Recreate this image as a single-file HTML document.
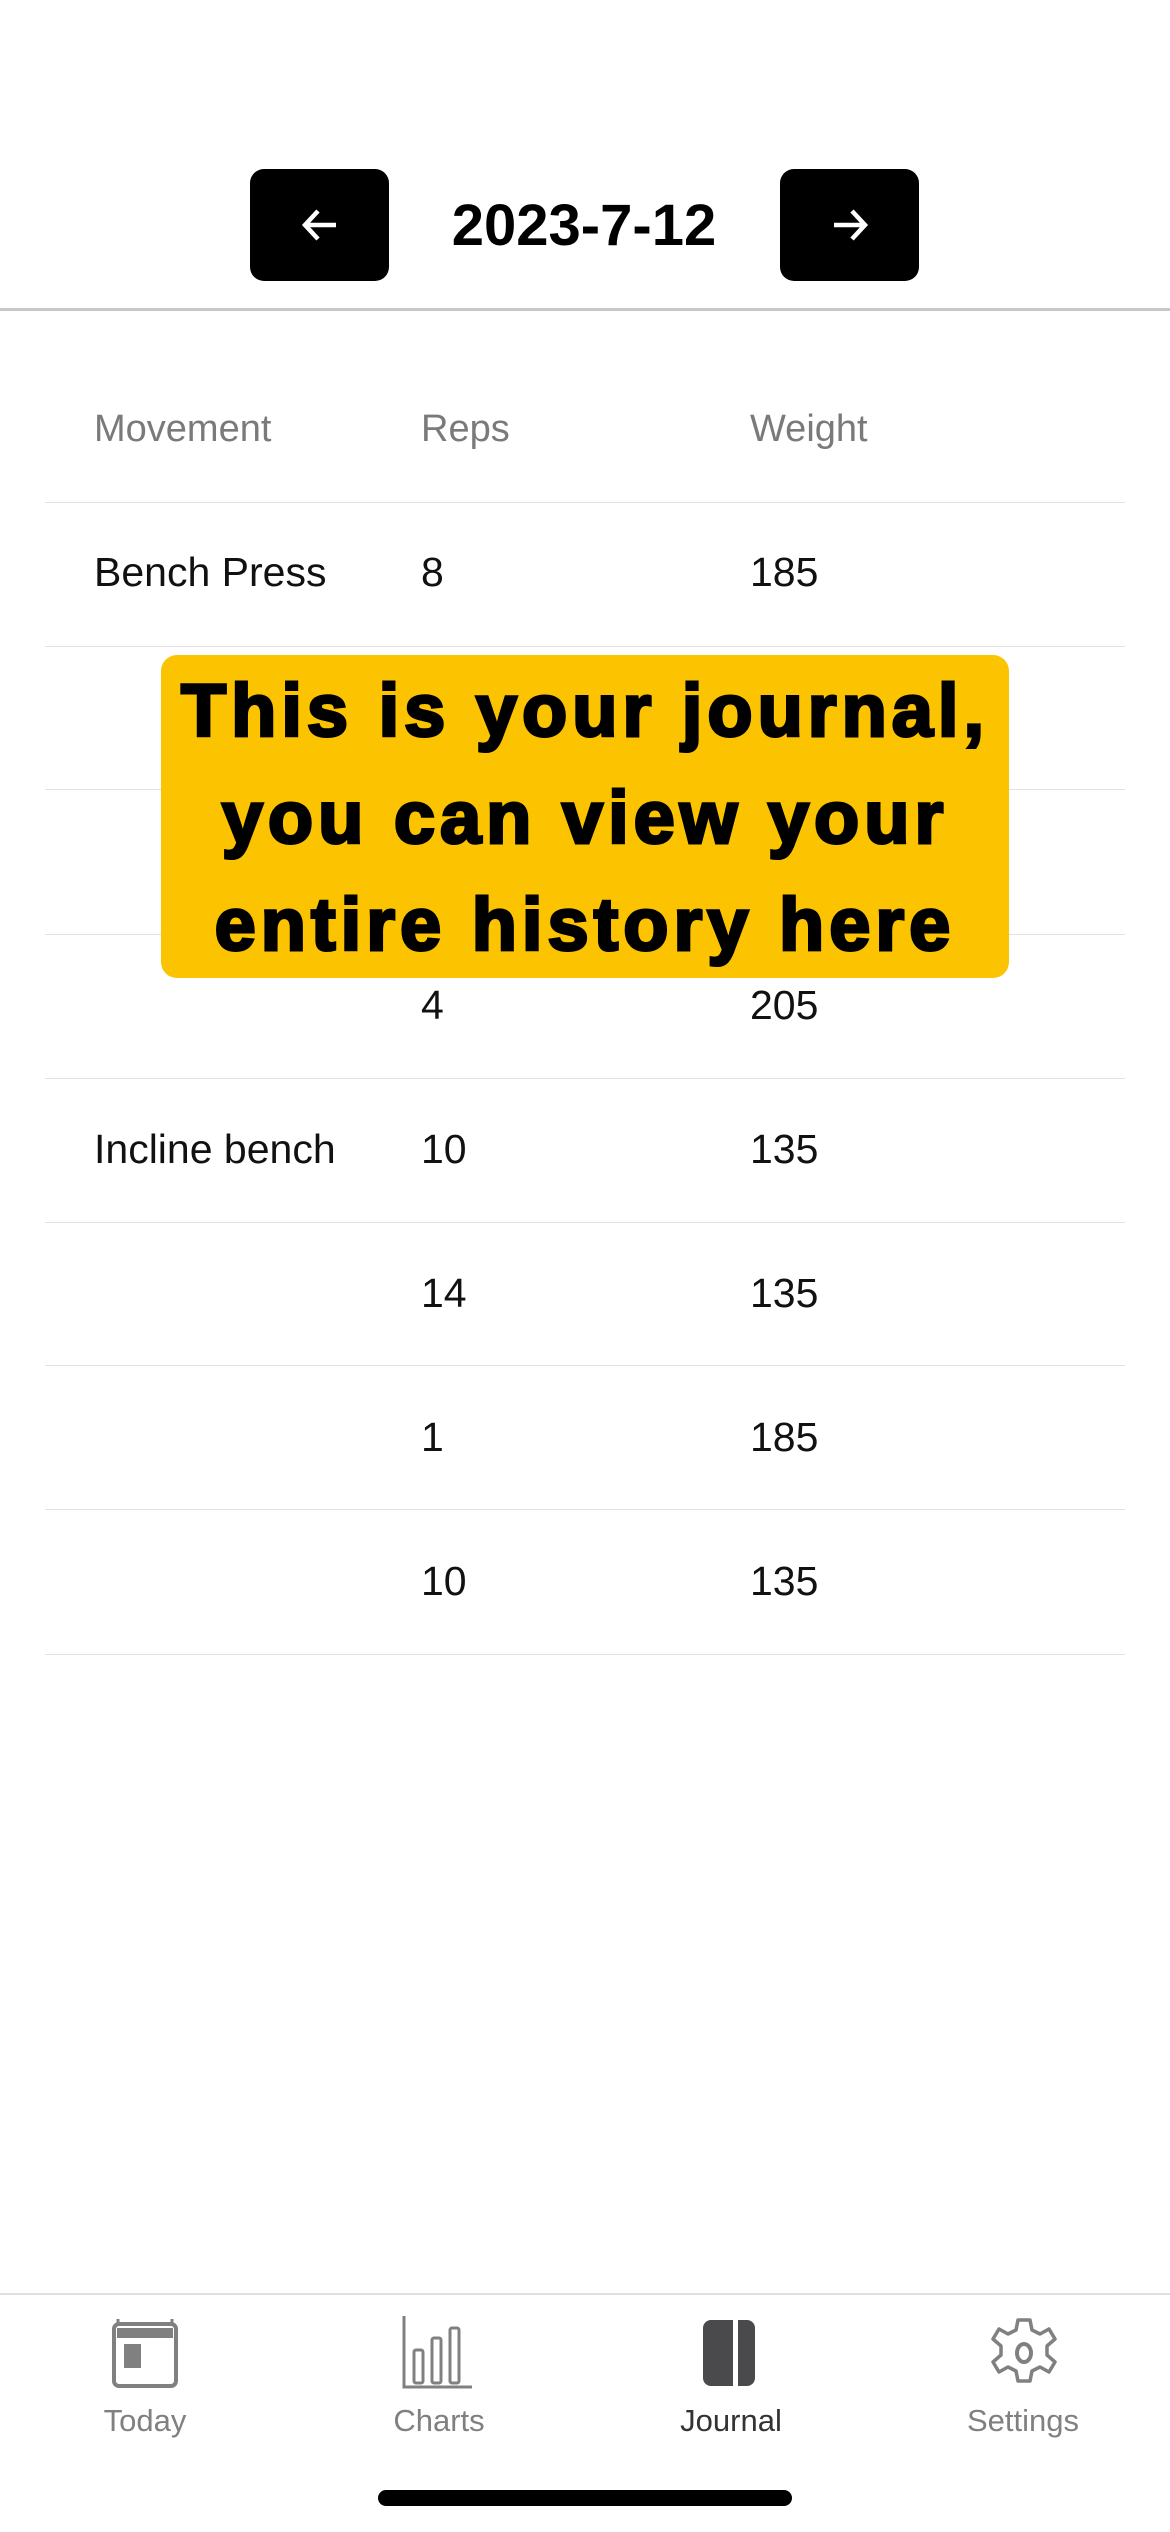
<!DOCTYPE html>
<html><head><meta charset="utf-8"><style>
*{margin:0;padding:0;box-sizing:border-box}
body{width:1170px;height:2532px;background:#fff;position:relative;overflow:hidden;font-family:"Liberation Sans",sans-serif}
.btn{position:absolute;top:169px;width:139px;height:112px;background:#000;border-radius:14px}
.btn svg{position:absolute;left:50px;top:36px}
.date{position:absolute;left:334px;width:500px;top:192px;text-align:center;font-size:58px;font-weight:bold;color:#000}
.hline{position:absolute;left:0;width:1170px;top:308px;height:3px;background:#c8c8c8}
.th{position:absolute;top:408px;font-size:38px;color:#7a7a7a}
.row{position:absolute;left:45px;width:1080px;height:1px;background:#e2dfe6}
.td{position:absolute;font-size:41px;color:#111}
.tip{position:absolute;left:161px;top:655px;width:848px;height:323px;background:#fcc400;border-radius:16px;text-align:center;font-weight:900;font-size:74px;line-height:107px;color:#000;-webkit-text-stroke:3px #000;letter-spacing:5px;padding-top:2px;white-space:nowrap}
.tabline{position:absolute;left:0;width:1170px;top:2293px;height:2px;background:#e0e0e0}
.tab{position:absolute;top:2403px;width:200px;text-align:center;font-size:31px;color:#808080}
.ico{position:absolute;top:2316px}
.home{position:absolute;left:378px;top:2490px;width:414px;height:16px;border-radius:8px;background:#000}
</style></head><body>
<div class="btn" style="left:250px"><svg width="40" height="40" viewBox="0 0 40 40"><path d="M36 20H6M18 6L5 20l13 14" stroke="#fff" stroke-width="4.5" fill="none"/></svg></div>
<div class="date">2023-7-12</div>
<div class="btn" style="left:780px"><svg width="40" height="40" viewBox="0 0 40 40"><path d="M4 20h30M22 6l13 14-13 14" stroke="#fff" stroke-width="4.5" fill="none"/></svg></div>
<div class="hline"></div>

<div class="th" style="left:94px">Movement</div>
<div class="th" style="left:421px">Reps</div>
<div class="th" style="left:750px">Weight</div>

<div class="row" style="top:502px"></div>
<div class="row" style="top:646px"></div>
<div class="row" style="top:789px"></div>
<div class="row" style="top:934px"></div>
<div class="row" style="top:1078px"></div>
<div class="row" style="top:1222px"></div>
<div class="row" style="top:1365px"></div>
<div class="row" style="top:1509px"></div>
<div class="row" style="top:1654px"></div>

<div class="td" style="left:94px;top:549px">Bench Press</div><div class="td" style="left:421px;top:549px">8</div><div class="td" style="left:750px;top:549px">185</div>
<div class="td" style="left:421px;top:982px">4</div><div class="td" style="left:750px;top:982px">205</div>
<div class="td" style="left:94px;top:1126px">Incline bench</div><div class="td" style="left:421px;top:1126px">10</div><div class="td" style="left:750px;top:1126px">135</div>
<div class="td" style="left:421px;top:1270px">14</div><div class="td" style="left:750px;top:1270px">135</div>
<div class="td" style="left:421px;top:1414px">1</div><div class="td" style="left:750px;top:1414px">185</div>
<div class="td" style="left:421px;top:1558px">10</div><div class="td" style="left:750px;top:1558px">135</div>

<div class="tip">This is your journal,<br>you can view your<br>entire history here</div>

<div class="tabline"></div>
<svg class="ico" style="left:110px" width="70" height="74" viewBox="0 0 70 74"><rect x="4" y="8" width="62" height="62" rx="5" fill="none" stroke="#808080" stroke-width="4"/><rect x="7" y="12" width="56" height="10" fill="#808080"/><rect x="14" y="28" width="17" height="24" fill="#808080"/><path d="M8 3v6M62 3v6" stroke="#808080" stroke-width="3"/></svg>
<svg class="ico" style="left:402px" width="70" height="74" viewBox="0 0 70 74"><path d="M2 0v71h68" stroke="#808080" stroke-width="3" fill="none"/><rect x="12" y="34" width="9" height="33" rx="2" fill="none" stroke="#808080" stroke-width="3"/><rect x="30" y="22" width="9" height="45" rx="2" fill="none" stroke="#808080" stroke-width="3"/><rect x="48" y="12" width="9" height="55" rx="2" fill="none" stroke="#808080" stroke-width="3"/></svg>
<svg class="ico" style="left:701px" width="56" height="74" viewBox="0 0 56 74"><rect x="2" y="4" width="52" height="66" rx="8" fill="#4a4a4c"/><rect x="32" y="2" width="5" height="70" fill="#fff"/></svg>
<svg class="ico" style="left:988px" width="72" height="74" viewBox="0 0 72 74"><path d="M30 4h12l2 10 8 4 9-5 6 10-8 7v9l8 7-6 10-9-5-8 4-2 10H30l-2-10-8-4-9 5-6-10 8-7v-9l-8-7 6-10 9 5 8-4z" fill="none" stroke="#808080" stroke-width="3.5" stroke-linejoin="round"/><ellipse cx="36" cy="37" rx="7" ry="9" fill="none" stroke="#808080" stroke-width="4"/></svg>
<div class="tab" style="left:45px">Today</div>
<div class="tab" style="left:339px">Charts</div>
<div class="tab" style="left:631px;color:#333">Journal</div>
<div class="tab" style="left:923px">Settings</div>
<div class="home"></div>
</body></html>
